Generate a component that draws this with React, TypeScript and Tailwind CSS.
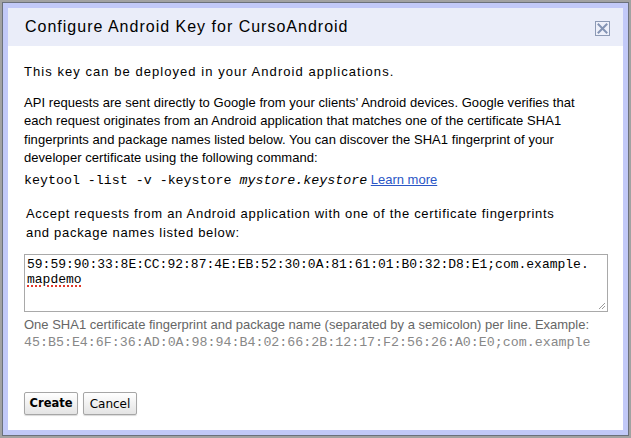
const SANS = "font-['Liberation_Sans',Arial,sans-serif]";
const MONO = "font-['Liberation_Mono','Courier_New',monospace]";

function CloseBox() {
  return (
    <button className="mt-[2px] flex h-[15px] w-[15px] items-center justify-center border border-[#8d9ab5] bg-[#eef0fa]">
      <svg width="11" height="11" viewBox="0 0 11 11">
        <path d="M1.5 1.5 L9.5 9.5 M9.5 1.5 L1.5 9.5" stroke="#8494b4" strokeWidth="2" strokeLinecap="square" />
      </svg>
    </button>
  );
}

function ResizeGrip() {
  return (
    <svg className="absolute bottom-[2px] right-[2px]" width="7" height="7" viewBox="0 0 7 7">
      <path d="M7 1 L1 7 M7 4 L4 7" stroke="#9a9a9a" strokeWidth="1" />
    </svg>
  );
}

export default function App() {
  return (
    <div className="h-[438px] w-[631px] overflow-hidden bg-[#a2a2a2] pl-[2px] pt-[2px]">
      <div className="h-[434px] w-[627px] border border-[#6b717c] bg-[#c2c9f8] p-[5px]">
        <div className={`flex h-full flex-col bg-white text-black ${SANS}`}>
          {/* title bar */}
          <div className="flex h-[38px] shrink-0 items-center justify-between bg-[#eaedf9] pl-[17px] pr-[13px]">
            <span className="text-[16px] tracking-[1px]">Configure Android Key for CursoAndroid</span>
            <CloseBox />
          </div>

          <div className="px-[16px]">
            <p className="mt-[17px] text-[13px] leading-[18px] tracking-[1.05px]">
              This key can be deployed in your Android applications.
            </p>

            <p className="mt-[13px] whitespace-nowrap text-[13px] leading-[18.3px] tracking-[0.05px]">
              API requests are sent directly to Google from your clients' Android devices. Google verifies that
              <br />
              each request originates from an Android application that matches one of the certificate SHA1
              <br />
              fingerprints and package names listed below. You can discover the SHA1 fingerprint of your
              <br />
              developer certificate using the following command:
            </p>
            <div className="mt-[4px] whitespace-nowrap text-[13px] leading-[18px]">
              <span className={`${MONO} text-[13.3px]`}>keytool -list -v -keystore </span>
              <span className={`${MONO} text-[13.3px] italic`}>mystore.keystore</span>{" "}
              <a href="#" className="text-[#2a56c6] underline">Learn more</a>
            </div>

            <p className="mt-[14px] whitespace-nowrap pl-[2px] text-[13px] leading-[19px] tracking-[0.7px]">
              Accept requests from an Android application with one of the certificate fingerprints
              <br />
              and package names listed below:
            </p>

            <div className={`relative mt-[12px] h-[58px] w-[584px] border border-[#a9a9a9] px-[2px] pt-[2px] text-[13px] leading-[15px] ${MONO}`}>
              <div>59:59:90:33:8E:CC:92:87:4E:EB:52:30:0A:81:61:01:B0:32:D8:E1;com.example.</div>
              <div>
                <span className="underline decoration-[#e0372a] decoration-dotted decoration-2 underline-offset-2">mapdemo</span>
              </div>
              <ResizeGrip />
            </div>

            <p className="mt-[4px] text-[13px] leading-[18px] text-[#666]">
              One SHA1 certificate fingerprint and package name (separated by a semicolon) per line. Example:
            </p>
            <p className={`text-[13.3px] leading-[18px] text-[#888] ${MONO}`}>
              45:B5:E4:6F:36:AD:0A:98:94:B4:02:66:2B:12:17:F2:56:26:A0:E0;com.example
            </p>

            <div className="mt-[40px] flex gap-[5px] font-['DejaVu_Sans',sans-serif]">
              <button className="h-[23px] w-[54px] rounded-[2px] border border-[#a6a6a6] bg-gradient-to-b from-white to-[#e4e4e4] text-[11.5px] font-bold shadow-[0_1px_1px_rgba(0,0,0,0.15)]">
                Create
              </button>
              <button className="h-[23px] w-[54px] rounded-[2px] border border-[#a6a6a6] bg-gradient-to-b from-white to-[#e4e4e4] text-[12px] shadow-[0_1px_1px_rgba(0,0,0,0.15)]">
                Cancel
              </button>
            </div>
          </div>
        </div>
      </div>
    </div>
  );
}
